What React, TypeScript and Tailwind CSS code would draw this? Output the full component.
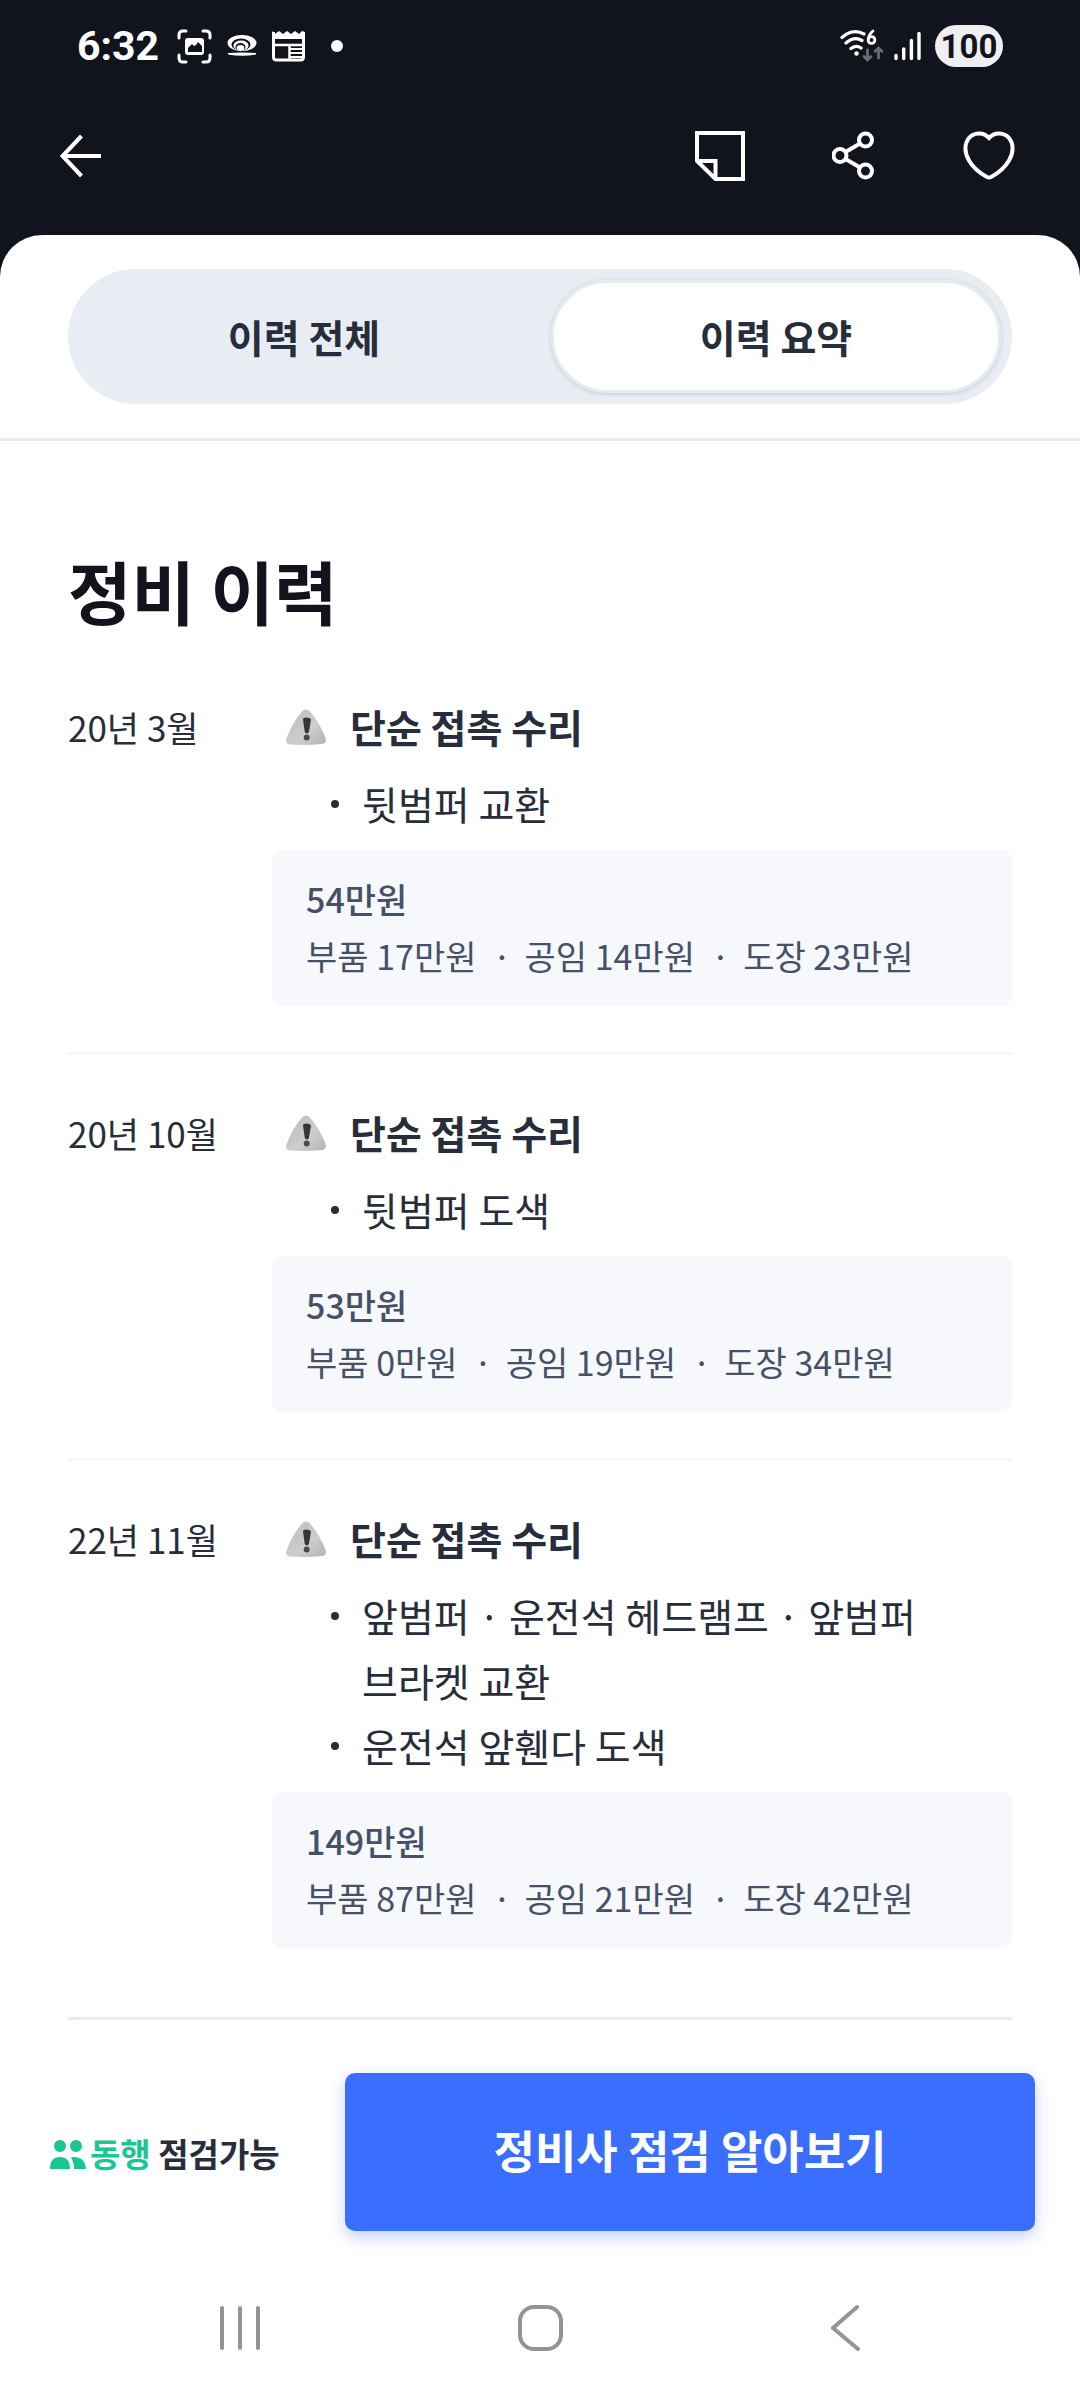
import { useState } from "react";
import { clsx } from "clsx";

type Repair = {
  date: string;
  title: string;
  items: string[];
  total: string;
  costs: string[];
};

const repairs: Repair[] = [
  { date: "20년 3월",  title: "단순 접촉 수리", items: ["뒷범퍼 교환"], total: "54만원", costs: ["부품 17만원", "공임 14만원", "도장 23만원"] },
  { date: "20년 10월", title: "단순 접촉 수리", items: ["뒷범퍼 도색"], total: "53만원", costs: ["부품 0만원", "공임 19만원", "도장 34만원"] },
  {
    date: "22년 11월",
    title: "단순 접촉 수리",
    items: ["앞범퍼 · 운전석 헤드램프 · 앞범퍼 브라켓 교환", "운전석 앞휀다 도색"],
    total: "149만원",
    costs: ["부품 87만원", "공임 21만원", "도장 42만원"],
  },
];

const tabs = ["이력 전체", "이력 요약"];

const StatusBar = () => (
  <div className="flex h-[92px] items-center justify-between pl-[77px] pr-[77px] text-white">
    <div className="flex items-center">
      <span className="font-['Roboto',sans-serif] text-[41px] font-bold leading-none">6:32</span>
      <svg className="ml-[18px] h-[35px] w-[35px]" viewBox="0 0 35 35" fill="none" stroke="currentColor" strokeWidth="3" strokeLinecap="round">
        <path d="M2 9V6Q2 2 6 2H9M26 2h3q4 0 4 4v3M33 26v3q0 4-4 4h-3M9 33H6q-4 0-4-4v-3" />
        <rect x="8" y="9" width="19" height="17" rx="3" fill="currentColor" stroke="none" />
        <path d="M11 23v-4l4-4 2 2 2-1 2-3 4 4v6z" fill="#11141c" stroke="none" />
      </svg>
      <svg className="ml-[15px] h-[22px] w-[30px]" viewBox="0 0 30 22" fill="currentColor">
        <ellipse cx="15" cy="8" rx="14.500" ry="8" />
        <ellipse cx="14" cy="9.500" rx="9.500" ry="6" fill="#11141c" />
        <ellipse cx="14" cy="10.500" rx="7.500" ry="5" />
        <ellipse cx="13.500" cy="12" rx="5" ry="4" fill="#11141c" />
        <ellipse cx="13.500" cy="13" rx="3.800" ry="3" />
        <path d="M1 18q14-1 28 0v1.500q-14 2.500-28 0z" />
      </svg>
      <svg className="ml-[15px] h-[31px] w-[33px]" viewBox="0 0 33 31" fill="none" stroke="currentColor">
        <path d="M1.500 1v25q0 3 3 3h24q3 0 3-3V1" strokeWidth="3" />
        <path d="M0 0l3 3 4-3 4 3 4-3 4 3 4-3 4 3 3-3 3 1v7H0z" fill="currentColor" stroke="none" />
        <path d="M2 14h29M17.500 13v15" strokeWidth="2.500" />
        <path d="M18 18h13M18 22h13M18 26h13" strokeWidth="2" />
      </svg>
      <span className="ml-[26px] h-3 w-3 rounded-full bg-white" />
    </div>
    <div className="flex items-center">
      <svg className="h-[34px] w-[44px]" viewBox="0 0 44 34" fill="none" stroke="currentColor" strokeWidth="3.200" strokeLinecap="round">
        <path d="M2 8.500Q13 -1 24 5M6 14Q14 7 22 11.500M11 19.500Q16 15.500 21 19" />
        <circle cx="16.500" cy="24.500" r="2.200" fill="currentColor" stroke="none" />
        <circle cx="31.500" cy="11" r="3.400" strokeWidth="2.800" />
        <path d="M28.200 10Q29 5 33 2" strokeWidth="2.800" />
        <path d="M27.500 21v9M24 27.500l3.500 3.500 3.500-3.500M38.500 29v-9M35 22.500l3.500-3.500 3.500 3.500" stroke="#6c6d72" strokeWidth="2.800" />
      </svg>
      <svg className="ml-[10px] h-[30px] w-[28px]" viewBox="0 0 28 30" fill="none" stroke="currentColor" strokeWidth="3.400" strokeLinecap="round">
        <path d="M2 24.500v3M9.700 18v9.500M17.400 9.500v18M25 2.500v25" />
      </svg>
      <span className="ml-[13px] flex h-[42px] w-[68px] items-center justify-center rounded-full bg-[#efeff1] font-['Roboto',sans-serif] text-[33px] font-bold leading-none text-[#11141c]">
        100
      </span>
    </div>
  </div>
);

const AppBar = () => (
  <div className="flex h-[128px] items-center justify-between pl-[60px] pr-[65px] text-white">
    <button type="button" aria-label="뒤로">
      <svg className="h-[44px] w-[42px]" viewBox="0 0 42 44" fill="none" stroke="currentColor" strokeWidth="4">
        <path d="M21.500 2L2.500 22l19 20M2.500 22H41" />
      </svg>
    </button>
    <div className="flex items-center gap-[87px]">
      <button type="button" aria-label="메모">
        <svg className="h-[50px] w-[50px]" viewBox="0 0 50 50" fill="none" stroke="currentColor" strokeWidth="4">
          <path d="M2 2h46v46H20.500L2 30zM2 30h18.500v18" />
        </svg>
      </button>
      <button type="button" aria-label="공유">
        <svg className="h-[50px] w-[44px]" viewBox="0 0 44 50" fill="none" stroke="currentColor" strokeWidth="4">
          <circle cx="8" cy="24.500" r="6.500" />
          <circle cx="33.500" cy="9" r="6.500" />
          <circle cx="33.500" cy="40" r="6.500" />
          <path d="M13.500 21l14.500-8.500M13.500 28l14.500 8.500" />
        </svg>
      </button>
      <button type="button" aria-label="찜하기">
        <svg className="h-[50px] w-[52px]" viewBox="0 0 52 50" fill="none" stroke="currentColor" strokeWidth="4" strokeLinejoin="miter">
          <path d="M26 7C20.500 0.500 10.500 1.500 6 7 1 13 1.500 22 6 29.500c4 7 11.500 13 18 16.500q2 1 4 0c6.500-3.500 14-9.500 18-16.500 4.500-7.500 5-16.500 0-22.500C41.500 1.500 31.500 0.500 26 7z" />
        </svg>
      </button>
    </div>
  </div>
);

const WarningIcon = () => (
  <svg className="h-9 w-[42px] shrink-0" viewBox="0 0 42 36">
    <defs>
      <linearGradient id="warn" x1="0" y1="0" x2="1" y2="1">
        <stop offset="0" stopColor="#bcbcbc" />
        <stop offset="0.600" stopColor="#cdcdcd" />
        <stop offset="1" stopColor="#b2b2b2" />
      </linearGradient>
    </defs>
    <path d="M17 2.500Q21 -1.500 25 2.500Q35 14 40.500 29Q42 34.500 37 35Q21 36.500 5 35.500Q0 35 1.500 29.500Q7 14 17 2.500z" fill="url(#warn)" />
    <path d="M18 10.500q0-2 3.500-2t4.500 2l-2 12q-.5 2-2.200 2t-2.100-2z" fill="#363636" />
    <circle cx="21.700" cy="28.500" r="3" fill="#4a4a4a" />
  </svg>
);

const RepairEntry = ({ repair, last }: { repair: Repair; last: boolean }) => (
  <li className={clsx("flex border-b-[3px] pt-[45px]", last ? "border-[#e8ecf0] pb-[69px]" : "border-[#f6f7f9] pb-[46px]")}>
    <p className="w-[204px] shrink-0 text-[35px] leading-[65px]">{repair.date}</p>
    <div className="min-w-0 flex-1">
      <h2 className="flex items-center gap-[23px] pl-[13px] text-[39px] font-bold leading-[65px]">
        <WarningIcon />
        {repair.title}
      </h2>
      <ul className="mt-3 text-[39px] leading-[65px]">
        {repair.items.map((item) => (
          <li key={item} className="flex pl-[59px] pr-[60px]">
            <span className="mt-[29px] mr-[23px] h-2 w-2 shrink-0 rounded-full bg-[#282d3c]" />
            <span className="break-keep">{item}</span>
          </li>
        ))}
      </ul>
      <div className="mt-[14px] rounded-[10px] bg-[#f6f8fc] px-[34px] pb-[22px] pt-5 text-[34px] leading-[57px] text-[#465069]">
        <p className="font-medium">{repair.total}</p>
        <p className="flex">
          {repair.costs.map((cost, i) => (
            <span key={cost}>
              {i > 0 && <span className="pl-4 pr-[13px]">·</span>}
              {cost}
            </span>
          ))}
        </p>
      </div>
    </div>
  </li>
);

const BottomBar = () => (
  <div className="flex items-center pl-[50px] pr-[45px] pt-[53px]">
    <p className="flex w-[295px] shrink-0 items-center pt-1 text-[33px] font-bold">
      <svg className="mr-1 h-[29px] w-9 text-[#18c794]" viewBox="0 0 36 29" fill="currentColor">
        <circle cx="10" cy="6" r="6" />
        <circle cx="26" cy="6" r="6" />
        <path d="M0 29Q0 17 10 17t10 12zM22 17q13-1 14 12H24q0-7-3-11z" />
      </svg>
      <span className="text-[#18c794]">동행</span>
      <span className="whitespace-pre"> 점검가능</span>
    </p>
    <button type="button" className="h-[158px] flex-1 rounded-[10px] bg-[#396eff] pb-1 text-[45px] font-bold text-white shadow-[0_6px_16px_rgba(57,110,255,0.3)]">
      정비사 점검 알아보기
    </button>
  </div>
);

const NavBar = () => (
  <nav className="flex items-center justify-between px-[220px] pb-[46px] pt-[73px] text-[#949494]">
    <button type="button" aria-label="최근 앱">
      <svg className="h-12 w-10" viewBox="0 0 40 48" fill="none" stroke="currentColor" strokeWidth="4" strokeLinecap="round">
        <path d="M2 4v40M20 4v40M38 4v40" />
      </svg>
    </button>
    <button type="button" aria-label="홈">
      <svg className="h-12 w-[46px]" viewBox="0 0 46 48" fill="none" stroke="currentColor" strokeWidth="4">
        <rect x="3" y="3" width="41" height="42" rx="14" />
      </svg>
    </button>
    <button type="button" aria-label="이전">
      <svg className="h-12 w-10" viewBox="0 0 40 48" fill="none" stroke="currentColor" strokeWidth="4" strokeLinecap="round" strokeLinejoin="round">
        <path d="M37 3L13 24l25 21" />
      </svg>
    </button>
  </nav>
);

export default function App() {
  const [tab, setTab] = useState(1);

  return (
    <div className="flex min-h-screen flex-col bg-[#11141c] font-['Noto_Sans_CJK_KR',sans-serif] text-[#282d3c]">
      <header className="pb-[15px]">
        <StatusBar />
        <AppBar />
      </header>

      <main className="flex-1 rounded-t-[42px] bg-white">
        {/* Tabs */}
        <div className="border-b-[3px] border-[#e8ecf2] px-[68px] py-[34px]">
          <div role="tablist" className="flex gap-[22px] rounded-full bg-[#e8edf4] p-[11px]">
            {tabs.map((label, i) => (
              <button
                key={label}
                type="button"
                role="tab"
                aria-selected={tab === i}
                onClick={() => setTab(i)}
                className={clsx(
                  "h-[113px] flex-1 rounded-full border-[3px] text-[39px] font-bold",
                  tab === i ? "border-[#e8ecf0] bg-white shadow-[0_1px_4px_rgba(40,55,80,0.2)]" : "border-transparent"
                )}
              >
                {label}
              </button>
            ))}
          </div>
        </div>

        {/* Repair history */}
        <section className="px-[68px] pt-[101px]">
          <h1 className="text-[69px] font-bold leading-[96px] text-[#11141c]">정비 이력</h1>
          <ul className="mt-[11px]">
            {repairs.map((repair, i) => (
              <RepairEntry key={repair.date} repair={repair} last={i === repairs.length - 1} />
            ))}
          </ul>
        </section>

        <BottomBar />
        <NavBar />
      </main>
    </div>
  );
}
